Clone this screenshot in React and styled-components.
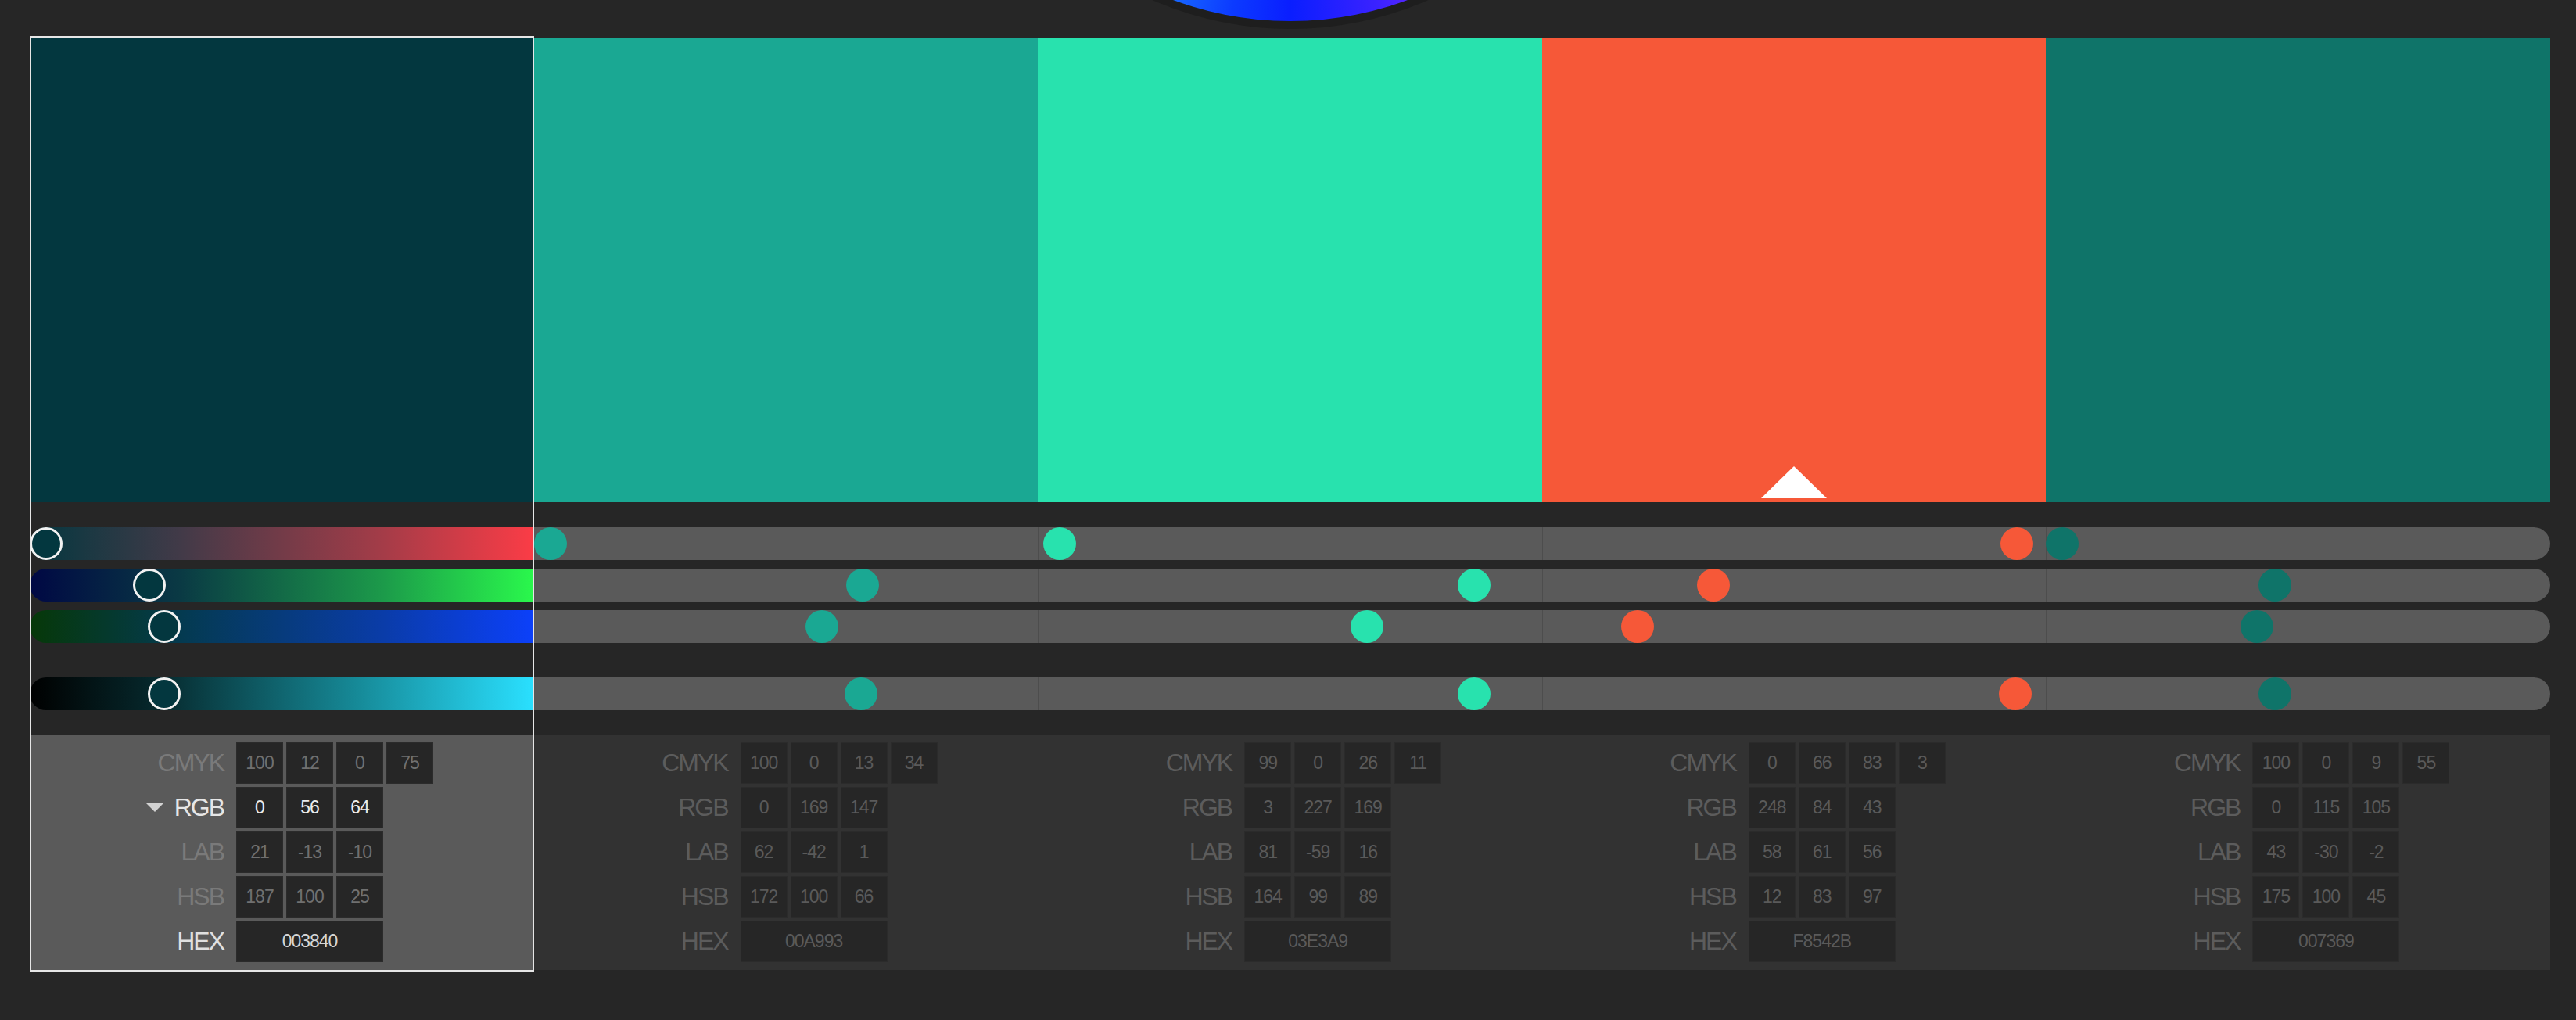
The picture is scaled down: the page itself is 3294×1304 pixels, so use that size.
import React from 'react';
import styled, { createGlobalStyle } from 'styled-components';

const GlobalStyle = createGlobalStyle`
  html, body { margin: 0; padding: 0; background: #262626; }
  body { font-family: "Liberation Sans", Arial, sans-serif; overflow: hidden; }
  * { box-sizing: border-box; }
`;

const palette = [
  { hex: '003840', display: '#03373f', cmyk: [100, 12, 0, 75], rgb: [0, 56, 64], lab: [21, -13, -10], hsb: [187, 100, 25] },
  { hex: '00A993', display: '#1aa893', cmyk: [100, 0, 13, 34], rgb: [0, 169, 147], lab: [62, -42, 1], hsb: [172, 100, 66] },
  { hex: '03E3A9', display: '#28e2ae', cmyk: [99, 0, 26, 11], rgb: [3, 227, 169], lab: [81, -59, 16], hsb: [164, 99, 89] },
  { hex: 'F8542B', display: '#f65838', cmyk: [0, 66, 83, 3], rgb: [248, 84, 43], lab: [58, 61, 56], hsb: [12, 83, 97] },
  { hex: '007369', display: '#0f7469', cmyk: [100, 0, 9, 55], rgb: [0, 115, 105], lab: [43, -30, -2], hsb: [175, 100, 45] },
];

const SELECTED = 0;
const MARKED = 3;

const selectedGradients = [
  'linear-gradient(to right, #03373f, #423a48 30%, #a43c48 70%, #fb3c46)',
  'linear-gradient(to right, #000844, #0a3a44 30%, #1c9a4a 70%, #2af84c)',
  'linear-gradient(to right, #063808, #043a50 30%, #0a3ca8 70%, #0c40fa)',
  'linear-gradient(to right, #000000, #06282c 25%, #168a98 65%, #2ae0ff)',
];

const Page = styled.div`
  position: relative;
  width: 3294px;
  min-height: 1304px;
  padding: 48px 0 0 38px;
  background: #262626;
`;

const Wheel = styled.div`
  position: absolute;
  left: 1210px;
  top: -843px;
  width: 880px;
  height: 880px;
  border-radius: 50%;
  background: #1e1e1e;
  padding: 10px;
`;

const WheelFace = styled.div`
  width: 100%;
  height: 100%;
  border-radius: 50%;
  background: conic-gradient(
    from 0deg,
    #ff2a2a 0deg,
    #ff2ad0 90deg,
    #7a2cff 150deg,
    #3a22ff 165deg,
    #0a1eff 180deg,
    #0c3aff 190deg,
    #1c7aff 205deg,
    #20c8ff 240deg,
    #2aff9a 300deg,
    #ff2a2a 360deg
  );
`;

const Columns = styled.div`
  width: 3223px;
  display: grid;
  grid-template-columns: repeat(5, 1fr);
`;

const Column = styled.div`
  position: relative;
  display: flex;
  flex-direction: column;
`;

const SelectionFrame = styled.div`
  position: absolute;
  top: -2px;
  bottom: -2px;
  left: 0;
  right: 0;
  border: 2px solid #e6e6e6;
  pointer-events: none;
  z-index: 5;
`;

const Swatch = styled.div`
  position: relative;
  height: 594px;
  background: ${(p) => p.$color};
`;

const Marker = styled.div`
  position: absolute;
  left: 50%;
  bottom: 5px;
  transform: translateX(-50%);
  width: 0;
  height: 0;
  border-left: 42px solid transparent;
  border-right: 42px solid transparent;
  border-bottom: 41px solid #ffffff;
`;

const SliderArea = styled.div`
  display: flex;
  flex-direction: column;
  padding: 32px 0;
`;

const Track = styled.div`
  position: relative;
  height: 42px;
  margin-top: ${(p) => p.$gap}px;
  background: ${(p) => p.$bg};
  border-radius: ${(p) => (p.$first ? '21px 0 0 21px' : p.$last ? '0 21px 21px 0' : '0')};
  box-shadow: ${(p) => (p.$divider ? 'inset 1px 0 0 rgba(0,0,0,0.14)' : 'none')};
`;

const Knob = styled.div`
  position: absolute;
  top: 0;
  width: 42px;
  height: 42px;
  border-radius: 50%;
  background: ${(p) => p.$color};
  border: ${(p) => (p.$selected ? '3px solid #f2f2f2' : 'none')};
  z-index: 2;
`;

const Panel = styled.div`
  height: 300px;
  padding-top: 9px;
  display: flex;
  flex-direction: column;
  gap: 4px;
  background: ${(p) => (p.$selected ? '#5a5a5a' : '#323232')};
`;

const Row = styled.div`
  display: flex;
  align-items: center;
  height: 53px;
`;

const Label = styled.div`
  width: 264px;
  padding-right: 16px;
  display: flex;
  justify-content: flex-end;
  align-items: center;
  gap: 12px;
  font-size: 32px;
  letter-spacing: -2px;
  color: ${(p) => p.$color};
`;

const Caret = styled.span`
  width: 0;
  height: 0;
  border-left: 11px solid transparent;
  border-right: 11px solid transparent;
  border-top: 11px solid #d2d2d2;
  margin-right: 2px;
`;

const Cells = styled.div`
  display: flex;
  gap: 4px;
`;

const Cell = styled.div`
  width: ${(p) => (p.$wide ? 188 : 60)}px;
  height: 53px;
  display: flex;
  align-items: center;
  justify-content: center;
  background: #262626;
  border: 1px solid #2b2b2b;
  font-size: 23px;
  letter-spacing: -1px;
  color: ${(p) => p.$color};
`;

function ColorTable({ color, selected }) {
  const active = selected ? '#e6e6e6' : '#5c5c5c';
  const dimLabel = selected ? '#7a7a7a' : '#5c5c5c';
  const dimVal = selected ? '#707070' : '#5a5a5a';
  const rows = [
    { name: 'CMYK', values: color.cmyk, label: dimLabel, val: dimVal },
    { name: 'RGB', values: color.rgb, label: active, val: selected ? '#ececec' : dimVal, caret: selected },
    { name: 'LAB', values: color.lab, label: dimLabel, val: dimVal },
    { name: 'HSB', values: color.hsb, label: dimLabel, val: dimVal },
  ];
  return (
    <Panel $selected={selected}>
      {rows.map((r) => (
        <Row key={r.name}>
          <Label $color={r.label}>
            {r.caret && <Caret />}
            {r.name}
          </Label>
          <Cells>
            {r.values.map((v, i) => (
              <Cell key={i} $color={r.val}>{v}</Cell>
            ))}
          </Cells>
        </Row>
      ))}
      <Row>
        <Label $color={selected ? '#e0e0e0' : '#5c5c5c'}>HEX</Label>
        <Cells>
          <Cell $wide $color={selected ? '#d6d6d6' : '#5a5a5a'}>{color.hex}</Cell>
        </Cells>
      </Row>
    </Panel>
  );
}

export default function App() {
  return (
    <>
      <GlobalStyle />
      <Page>
        <Wheel>
          <WheelFace />
        </Wheel>
        <Columns>
          {palette.map((c, idx) => {
            const selected = idx === SELECTED;
            const values = [c.rgb[0] / 255, c.rgb[1] / 255, c.rgb[2] / 255, c.hsb[2] / 100];
            const gaps = [0, 11, 11, 44];
            return (
              <Column key={c.hex}>
                <Swatch $color={c.display}>{idx === MARKED && <Marker />}</Swatch>
                <SliderArea>
                  {values.map((v, k) => (
                    <Track
                      key={k}
                      $gap={gaps[k]}
                      $bg={selected ? selectedGradients[k] : '#5a5a5a'}
                      $first={idx === 0}
                      $last={idx === palette.length - 1}
                      $divider={idx > 1}
                    >
                      <Knob
                        $selected={selected}
                        $color={c.display}
                        style={{ left: `calc(${v.toFixed(4)} * (100% - 42px))` }}
                      />
                    </Track>
                  ))}
                </SliderArea>
                <ColorTable color={c} selected={selected} />
                {selected && <SelectionFrame />}
              </Column>
            );
          })}
        </Columns>
      </Page>
    </>
  );
}
